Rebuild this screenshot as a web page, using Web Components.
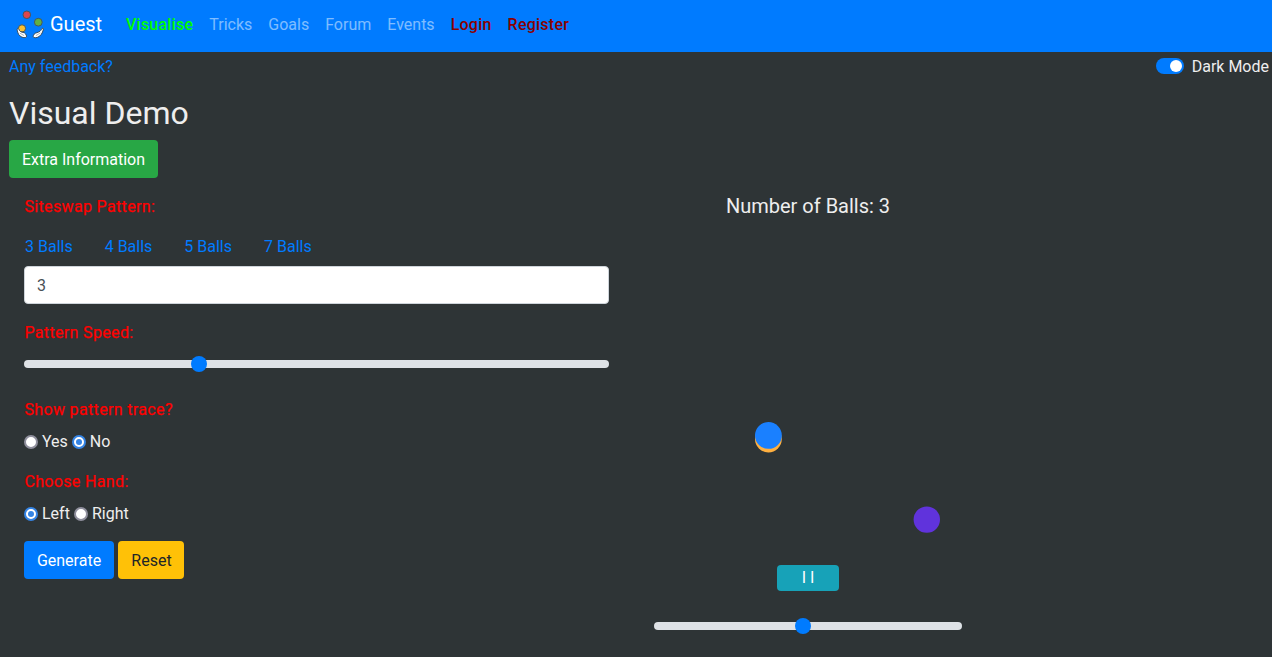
<!DOCTYPE html>
<html lang="en">
<head>
<meta charset="utf-8">
<title>Visual Demo</title>
<style>
html,body{margin:0;background:#2e3436}
body{font:16px/24px Roboto,sans-serif;color:#eee;height:657px;overflow:hidden}
</style>
</head>
<body>
<juggle-app></juggle-app>
<script>
const define=(name,html)=>customElements.define(name,class extends HTMLElement{
  constructor(){super();this.attachShadow({mode:'open'}).innerHTML='<style>*{box-sizing:border-box}</style>'+html;}
});

define('juggle-logo',`<style>:host{display:block;width:30px;height:30px}svg{display:block}</style>
<svg width="30" height="30" viewBox="0 0 30 30">
<g stroke="#49565c" stroke-width="1">
<circle cx="10.8" cy="4.8" r="3.8" fill="#df454d"/>
<circle cx="22.3" cy="12.2" r="3.9" fill="#60b044"/>
<circle cx="6" cy="18.4" r="3.6" fill="#fbc02f"/></g>
<g fill="#fff" stroke="#34434b" stroke-width=".9" stroke-linejoin="round">
<path d="M1.6 18.3c1.2-.1 1.5 2.3 2.7 3.1 1.6 1.2 4.2.7 5.3 2.5.8 1.5 1.6 2.9.3 3.5-2.5.9-5.6-.6-7.1-2.8-1.1-1.7-2.3-6-1.2-6.3z"/>
<path d="M27 18.1c-1.2-.1-1.7 2.2-3 3.2-1.7 1.4-4.7 1.3-5.9 2.9-.9 1.4-1.5 2.8-.2 3.3 2.4.9 5.6-.7 7.2-2.9 1.3-1.7 3-6.1 1.9-6.5z"/>
<path d="M3.8 23.1l4.3 2.5M24.4 22.9L19.9 25.6" fill="none" stroke-width=".4"/></g></svg>`);

define('nav-item',`<style>:host{display:block;padding:0 8px;color:rgba(255,255,255,.5);white-space:nowrap}
:host([active]){color:#0f0}:host([account]){color:#8b0000}
:host([active]),:host([account]){font-weight:500;letter-spacing:.24px}</style><slot></slot>`);

define('nav-bar',`<style>:host{display:flex;align-items:center;height:52px;padding:0 16px 3px;background:#007bff}
.brand{font-size:20px;line-height:30px;color:#fff;margin:-2px 16px 0 4px;width:52px}</style>
<juggle-logo></juggle-logo><div class="brand">Guest</div><slot></slot>`);

define('toggle-switch',`<style>:host{display:flex;align-items:center;gap:8px}
i{display:block;width:28px;height:16px;border-radius:8px;background:#007bff;padding:2px 2px 2px 14px;margin-top:-2px}
i::after{content:"";display:block;width:12px;height:12px;border-radius:50%;background:#fff}</style><i></i><span><slot></slot></span>`);

define('ui-button',`<style>:host{display:inline-block;height:38px;padding:8px 0 6px;border-radius:4px;color:#fff;background:#007bff;white-space:nowrap;text-align:center;width:90px;box-sizing:border-box}
:host([kind=success]){background:#28a745;width:149px}:host([kind=warning]){background:#ffc107;color:#212529;width:66px;padding-left:1px}
:host([kind=info]){background:#17a2b8;height:26px;width:62px;padding:1px 0}</style><slot></slot>`);

define('field-label',`<style>:host{display:block;box-sizing:border-box;height:24px;padding:1px 0 0 .4px;color:#f00;-webkit-text-stroke:.25px #f00;letter-spacing:.35px}</style><slot></slot>`);

define('range-slider',`<style>:host{display:flex;align-items:center;height:24px}
.track{flex:1;height:8px;border-radius:8px;background:#dee2e6;display:flex;align-items:center}
.thumb{width:16px;height:16px;border-radius:50%;background:#007bff;margin-left:var(--at)}</style><div class="track"><div class="thumb"></div></div>`);

define('radio-option',`<style>:host{display:flex;align-items:center;gap:4px;height:24px}
i{width:14px;height:14px;border-radius:50%;background:#fff;border:2px solid #8f8f9d;margin-top:2px}
span{padding-top:2px}
:host([checked]) i{border-color:#3584e4;padding:2px}
:host([checked]) i::after{content:"";display:block;width:6px;height:6px;border-radius:50%;background:#3584e4}</style><i></i><span><slot></slot></span>`);

define('text-field',`<style>:host{display:block;box-sizing:border-box;height:38px;border:1px solid #ced4da;border-radius:4px;background:#fff;color:#495057;padding:7px 12px 5px}</style><slot></slot>`);

define('pattern-form',`<style>:host{display:block;width:585px}
.tabs{display:flex;gap:32px;color:#007bff;padding:9px 1px 7px;margin-top:8px}
.speed{margin:16px 0 8px}.trace{margin:21px 0 8px}.hand{margin:16px 0 8px}
.row{display:flex;gap:4px}.actions{margin-top:16px}</style>
<field-label>Siteswap Pattern:</field-label>
<div class="tabs"><span>3 Balls</span><span>4 Balls</span><span>5 Balls</span><span>7 Balls</span></div>
<text-field>3</text-field>
<field-label class="speed">Pattern Speed:</field-label>
<range-slider style="--at:167px"></range-slider>
<field-label class="trace">Show pattern trace?</field-label>
<div class="row"><radio-option>Yes</radio-option><radio-option checked>No</radio-option></div>
<field-label class="hand">Choose Hand:</field-label>
<div class="row"><radio-option checked>Left</radio-option><radio-option>Right</radio-option></div>
<div class="row actions"><ui-button>Generate</ui-button><ui-button kind="warning">Reset</ui-button></div>`);

define('juggle-stage',`<style>:host{display:flex;flex-direction:column;align-items:center;width:308px}
.count{font-size:20px;line-height:24px}svg{display:block}range-slider{width:100%;margin-top:23px}</style>
<div class="count">Number of Balls: 3</div>
<svg width="308" height="347" viewBox="0 0 308 347">
<circle cx="114.4" cy="221" r="13.4" fill="#ffb040"/><circle cx="114.4" cy="217.4" r="13.4" fill="#1a80ff"/><circle cx="272.8" cy="301.6" r="13.2" fill="#6033dc"/></svg>
<ui-button kind="info">I I</ui-button>
<range-slider style="--at:141px"></range-slider>`);

define('juggle-app',`<style>:host{display:block}
.top{display:flex;justify-content:space-between;padding:3px 3px 0 9px}
.top a{color:#007bff}
main{padding:0 9px}
h2{font-size:32px;line-height:38px;font-weight:400;margin:15px 0 8px}
.cols{display:flex;gap:45px;padding:16px 15px 0}</style>
<nav-bar><nav-item active>Visualise</nav-item><nav-item>Tricks</nav-item><nav-item>Goals</nav-item><nav-item>Forum</nav-item><nav-item>Events</nav-item><nav-item account>Login</nav-item><nav-item account>Register</nav-item></nav-bar>
<div class="top"><a>Any feedback?</a><toggle-switch>Dark Mode</toggle-switch></div>
<main><h2>Visual Demo</h2><ui-button kind="success" style="vertical-align:top">Extra Information</ui-button>
<div class="cols"><pattern-form></pattern-form><juggle-stage></juggle-stage></div></main>`);
</script>
</body>
</html>
